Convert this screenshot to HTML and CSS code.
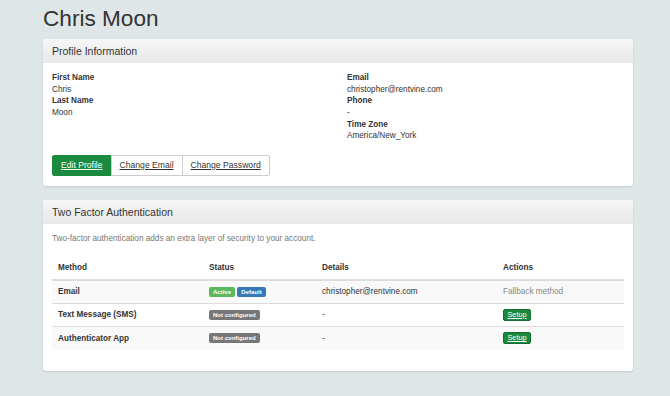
FILE: index.html
```html
<!DOCTYPE html>
<html lang="en">
<head>
  <meta charset="UTF-8">
  <title>Chris Moon</title>
  <link rel="stylesheet" href="styles.css">
</head>
<body>
  <h1 class="page-title">Chris Moon</h1>

  <div class="panel">
    <div class="panel-heading">Profile Information</div>
    <div class="panel-body">
      <div class="profile-grid">
        <dl class="fields">
          <dt>First Name</dt>
          <dd>Chris</dd>
          <dt>Last Name</dt>
          <dd>Moon</dd>
        </dl>
        <dl class="fields">
          <dt>Email</dt>
          <dd>christopher@rentvine.com</dd>
          <dt>Phone</dt>
          <dd>-</dd>
          <dt>Time Zone</dt>
          <dd>America/New_York</dd>
        </dl>
      </div>
      <div class="btn-group">
        <a href="#" class="btn btn-green">Edit Profile</a>
        <a href="#" class="btn">Change Email</a>
        <a href="#" class="btn">Change Password</a>
      </div>
    </div>
  </div>

  <div class="panel">
    <div class="panel-heading">Two Factor Authentication</div>
    <div class="panel-body">
      <p class="muted">Two-factor authentication adds an extra layer of security to your account.</p>
      <table class="table">
        <thead>
          <tr>
            <th class="col-method">Method</th>
            <th class="col-status">Status</th>
            <th class="col-details">Details</th>
            <th>Actions</th>
          </tr>
        </thead>
        <tbody>
          <tr>
            <td class="strong">Email</td>
            <td><span class="badge badge-green">Active</span> <span class="badge badge-blue">Default</span></td>
            <td>christopher@rentvine.com</td>
            <td class="fallback">Fallback method</td>
          </tr>
          <tr>
            <td class="strong">Text Message (SMS)</td>
            <td><span class="badge badge-grey">Not configured</span></td>
            <td>-</td>
            <td><a href="#" class="btn-small">Setup</a></td>
          </tr>
          <tr>
            <td class="strong">Authenticator App</td>
            <td><span class="badge badge-grey">Not configured</span></td>
            <td>-</td>
            <td><a href="#" class="btn-small">Setup</a></td>
          </tr>
        </tbody>
      </table>
    </div>
  </div>
</body>
</html>
```

FILE: styles.css
```css
body {
  margin: 0;
  padding: 0 37px 0 43px;
  background-color: #dee6e7;
  color: #333;
  font-family: "Liberation Sans", Arial, sans-serif;
  font-size: 8.2px;
  line-height: 11.67px;
}
.page-title {
  margin: 5px 0 6px;
  font-size: 22.6px;
  line-height: 28px;
  font-weight: normal;
}
.panel {
  background: #fff;
  border-radius: 3px;
  box-shadow: 0 1px 2px rgba(0, 0, 0, 0.12);
  margin-bottom: 14px;
}
.panel-heading {
  height: 24px;
  line-height: 24px;
  padding: 0 9px;
  font-size: 10.5px;
  background: linear-gradient(#f6f6f6, #e8e8e8);
  border-radius: 3px 3px 0 0;
}
.panel-body {
  padding: 9px 9px 10px;
}
.profile-grid {
  display: grid;
  grid-template-columns: 295px auto;
}
.fields {
  margin: 0;
}
.fields dt {
  font-weight: bold;
}
.fields dd {
  margin: 0;
}
.btn-group {
  display: flex;
  margin-top: 13px;
}
.btn {
  height: 19px;
  line-height: 19px;
  padding: 0 8px;
  font-size: 8.6px;
  color: #333;
  border: 1px solid #ccc;
  margin-left: -1px;
  background: #fff;
}
.btn:first-child {
  margin-left: 0;
  border-radius: 2px 0 0 2px;
}
.btn:last-child {
  border-radius: 0 2px 2px 0;
}
.btn-green {
  background: #1a8a3e;
  border-color: #1a8a3e;
  color: #fff;
}
.muted {
  margin: 0 0 12px;
  color: #777;
}
.table {
  width: 100%;
  border-collapse: collapse;
  margin-bottom: 11px;
}
.table th,
.table td {
  text-align: left;
  padding: 5.2px 6px;
  vertical-align: middle;
}
.table th {
  border-bottom: 2px solid #ddd;
}
.table td {
  border-top: 1px solid #ddd;
}
.table tbody tr:first-child td {
  border-top: none;
}
.table tbody tr:nth-child(odd) {
  background: #f9f9f9;
}
.col-method {
  width: 139px;
}
.col-status {
  width: 101px;
}
.col-details {
  width: 169px;
}
.strong {
  font-weight: bold;
}
.fallback {
  color: #888;
}
.badge {
  display: inline-block;
  height: 10px;
  line-height: 10px;
  padding: 0 4px;
  font-size: 6px;
  font-weight: bold;
  color: #fff;
  border-radius: 2px;
  vertical-align: middle;
}
.badge-green {
  background: #5cb85c;
}
.badge-blue {
  background: #337ab7;
}
.badge-grey {
  background: #777;
}
.btn-small {
  display: inline-block;
  height: 10px;
  line-height: 10px;
  padding: 0 3.5px;
  font-size: 7.3px;
  color: #fff;
  background: #1a8a3e;
  border: 1px solid #146c30;
  border-radius: 2px;
  vertical-align: middle;
}
```
